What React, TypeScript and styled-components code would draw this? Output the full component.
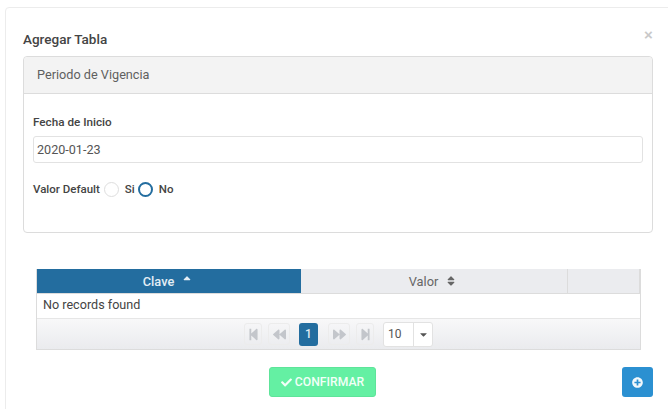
import { createGlobalStyle } from "styled-components";
import styled from "styled-components";
import {
  FaBackward,
  FaCaretDown,
  FaCheck,
  FaForward,
  FaPlusCircle,
  FaSort,
  FaSortUp,
  FaStepBackward,
  FaStepForward,
} from "react-icons/fa";

const GlobalStyle = createGlobalStyle`
  html, body {
    margin: 0;
    height: 409px;
    overflow: hidden;
    background: #fff;
    font-family: Roboto, "Liberation Sans", sans-serif;
    color: #444;
  }
  #root {
    width: 668px;
    height: 409px;
    padding-top: 7px;
    box-sizing: border-box;
    overflow: hidden;
  }
`;

const Modal = styled.div`
  box-sizing: border-box;
  position: relative;
  width: 700px;
  height: 420px;
  margin-left: 5px;
  padding: 24px 0 0 17px;
  border: 1px solid #ececec;
  border-radius: 4px;
`;

const Title = styled.h4`
  margin: 0 0 9px;
  font-size: 13.5px;
  line-height: 15px;
  font-weight: 500;
  color: #444;
`;

const Close = styled.button`
  position: absolute;
  top: 18px;
  left: 638px;
  padding: 0;
  border: 0;
  background: none;
  font-family: "Liberation Sans", sans-serif;
  font-size: 15px;
  line-height: 18px;
  font-weight: 700;
  color: #c9c9c9;
`;

const Panel = styled.section`
  box-sizing: border-box;
  width: 630px;
  height: 177px;
  border: 1px solid #dcdcdc;
  border-radius: 4px;
`;

const PanelHeader = styled.div`
  box-sizing: border-box;
  height: 37px;
  padding-left: 13px;
  background: #f3f3f3;
  border-bottom: 1px solid #dcdcdc;
  border-radius: 4px 4px 0 0;
  font-size: 12.7px;
  line-height: 35px;
  color: #5f5f5f;
`;

const PanelBody = styled.div`
  padding: 21px 9px 0;
`;

const FieldLabel = styled.label`
  display: block;
  margin-bottom: 7px;
  font-size: 11.7px;
  line-height: 14px;
  font-weight: 500;
  color: #444;
`;

const DateInput = styled.input`
  display: block;
  box-sizing: border-box;
  width: 610px;
  height: 27px;
  padding: 0 3px;
  border: 1px solid #e2e2e2;
  border-radius: 3px;
  outline: none;
  font-family: inherit;
  font-size: 12.6px;
  color: #555;
`;

const RadioRow = styled.div`
  display: flex;
  align-items: center;
  height: 16px;
  margin-top: 18px;
  font-size: 11.5px;
  font-weight: 500;
  color: #444;
`;

const Radio = styled.span<{ $on?: boolean }>`
  box-sizing: border-box;
  width: 15px;
  height: 15px;
  border-radius: 50%;
  border: ${(p) => (p.$on ? "2px solid #236d9f" : "1px solid #dedede")};
  margin: 0 6px 0 ${(p) => (p.$on ? 3 : 4)}px;
`;

const TableWrap = styled.div`
  box-sizing: border-box;
  width: 605px;
  margin: 36px 0 0 13px;
  border: 1px solid #dcdcdc;
  border-top: 0;
`;

const HeaderRow = styled.div`
  display: grid;
  grid-template-columns: 264px 267px 1fr;
  height: 24px;
  border-bottom: 1px solid #dcdcdc;
  background: #ebecef;
`;

const HeaderCell = styled.div<{ $active?: boolean }>`
  display: flex;
  align-items: center;
  justify-content: center;
  gap: 9px;
  padding-right: 4px;
  font-size: 12.8px;
  font-weight: ${(p) => (p.$active ? 500 : 400)};
  color: ${(p) => (p.$active ? "#e4eef5" : "#666")};
  background: ${(p) => (p.$active ? "#236d9f" : "transparent")};
  & + & {
    border-right: 1px solid #dcdcdc;
  }
  svg {
    width: 8px;
    height: 12px;
  }
`;

const EmptyRow = styled.div`
  box-sizing: border-box;
  height: 25px;
  padding-left: 6px;
  border-bottom: 1px solid #e6e6e6;
  font-size: 12.6px;
  line-height: 22px;
  color: #444;
`;

const Paginator = styled.div`
  display: flex;
  align-items: center;
  justify-content: center;
  gap: 6px;
  height: 30px;
  background: linear-gradient(#f8f8f9, #eaebee);
`;

const PageLink = styled.span`
  display: flex;
  align-items: center;
  justify-content: center;
  box-sizing: border-box;
  width: 18px;
  height: 22px;
  border: 1px solid #ececec;
  border-radius: 3px;
  color: #c3c6cb;
  svg {
    width: 13px;
    height: 13px;
  }
`;

const WidePageLink = styled(PageLink)`
  width: 22px;
`;

const CurrentPage = styled.span`
  display: flex;
  align-items: center;
  justify-content: center;
  width: 19px;
  height: 23px;
  margin: 0 4px 0 3px;
  border-radius: 3px;
  background: #236d9f;
  color: #dfeaf2;
  font-size: 12px;
  font-weight: 500;
`;

const PageSize = styled.div`
  display: flex;
  box-sizing: border-box;
  width: 50px;
  height: 25px;
  margin-left: 3px;
  border: 1px solid #e2e2e2;
  border-radius: 3px;
  background: #fff;
`;

const PageSizeValue = styled.span`
  flex: 1;
  padding-left: 4px;
  border-right: 1px solid #e2e2e2;
  font-size: 12px;
  line-height: 23px;
  color: #555;
`;

const PageSizeArrow = styled.span`
  display: flex;
  align-items: center;
  justify-content: center;
  width: 18px;
  color: #555;
  svg {
    width: 9px;
    height: 11px;
  }
`;

const Footer = styled.div`
  display: flex;
  align-items: flex-start;
  margin-top: 17px;
  padding-left: 246px;
`;

const ConfirmButton = styled.button`
  display: flex;
  align-items: center;
  justify-content: center;
  gap: 3px;
  box-sizing: border-box;
  width: 107px;
  height: 30px;
  padding: 0;
  border: 1px solid #5ee49a;
  border-radius: 3px;
  background: #64f0a3;
  color: #f2fff8;
  font-family: inherit;
  font-size: 12.2px;
  font-weight: 500;
  svg {
    width: 11px;
    height: 11px;
  }
`;

const AddButton = styled.button`
  display: flex;
  align-items: center;
  justify-content: center;
  box-sizing: border-box;
  width: 31px;
  height: 30px;
  margin-left: 246px;
  padding: 0;
  border: 0;
  border-radius: 3px;
  background: #2b90d1;
  color: #f2f8fc;
  svg {
    width: 11px;
    height: 11px;
  }
`;

export default function App() {
  return (
    <>
      <GlobalStyle />
      <Modal>
        <Title>Agregar Tabla</Title>
        <Close>×</Close>
        <Panel>
          <PanelHeader>Periodo de Vigencia</PanelHeader>
          <PanelBody>
            <FieldLabel>Fecha de Inicio</FieldLabel>
            <DateInput defaultValue="2020-01-23" />
            <RadioRow>
              Valor Default
              <Radio />
              Si
              <Radio $on />
              No
            </RadioRow>
          </PanelBody>
        </Panel>
        <TableWrap>
          <HeaderRow>
            <HeaderCell $active>
              Clave <FaSortUp />
            </HeaderCell>
            <HeaderCell>
              Valor <FaSort />
            </HeaderCell>
            <HeaderCell />
          </HeaderRow>
          <EmptyRow>No records found</EmptyRow>
          <Paginator>
            <PageLink>
              <FaStepBackward />
            </PageLink>
            <WidePageLink>
              <FaBackward />
            </WidePageLink>
            <CurrentPage>1</CurrentPage>
            <WidePageLink>
              <FaForward />
            </WidePageLink>
            <PageLink>
              <FaStepForward />
            </PageLink>
            <PageSize>
              <PageSizeValue>10</PageSizeValue>
              <PageSizeArrow>
                <FaCaretDown />
              </PageSizeArrow>
            </PageSize>
          </Paginator>
        </TableWrap>
        <Footer>
          <ConfirmButton>
            <FaCheck /> CONFIRMAR
          </ConfirmButton>
          <AddButton>
            <FaPlusCircle />
          </AddButton>
        </Footer>
      </Modal>
    </>
  );
}
